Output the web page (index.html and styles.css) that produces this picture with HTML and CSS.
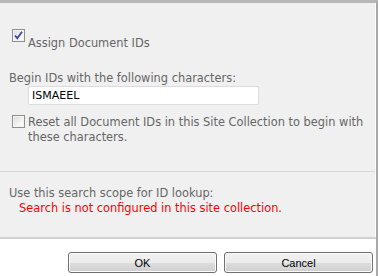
FILE: index.html
```html
<!DOCTYPE html>
<html lang="en">
<head>
    <meta charset="UTF-8">
    <title>Document ID Settings</title>
    <link rel="stylesheet" href="styles.css">
</head>
<body>
    <div class="dialog">
        <div class="panel">
            <div class="group group-ids">
                <label class="check-row check-row-main">
                    <span class="checkbox checked">
                        <svg width="11" height="11" viewBox="0 0 11 11"><path d="M2 5.5 L4.3 8.2 L9 1.8" fill="none" stroke="#3b4a9c" stroke-width="1.8"/></svg>
                    </span>
                    <span class="check-label check-label-low">Assign Document IDs</span>
                </label>

                <div class="field-label">Begin IDs with the following characters:</div>
                <input class="text-input" type="text" value="ISMAEEL">

                <label class="check-row">
                    <span class="checkbox"></span>
                    <span class="check-label">Reset all Document IDs in this Site Collection to begin with these characters.</span>
                </label>
            </div>

            <div class="group group-search">
                <div class="field-label">Use this search scope for ID lookup:</div>
                <div class="error-text">Search is not configured in this site collection.</div>
            </div>
        </div>

        <div class="footer">
            <button class="btn">OK</button>
            <button class="btn">Cancel</button>
        </div>
    </div>
</body>
</html>
```

FILE: styles.css
```css
* {
    margin: 0;
    padding: 0;
    box-sizing: border-box;
}

body {
    font-family: "DejaVu Sans", Verdana, sans-serif;
    font-size: 11.4px;
    line-height: 15px;
    color: #666666;
    background: #ffffff;
}

.dialog {
    width: 378px;
    height: 276px;
    border-top: 3px solid #b8b8b8;
    border-right: 2px solid #a9a9a9;
    display: flex;
    flex-direction: column;
}

.panel {
    background: #f0f0f0;
    margin-right: 1px;
}

.group {
    padding-left: 9px;
}

.group-ids {
    padding-top: 26px;
    padding-bottom: 26px;
    border-bottom: 1px solid #d8d8d8;
}

.group-search {
    padding-top: 14px;
    padding-bottom: 21px;
}

.check-row {
    display: flex;
    align-items: flex-start;
    gap: 3px;
    margin-left: 3px;
    margin-top: 10px;
    padding-right: 4px;
}

.check-row-main {
    margin-top: 0;
    margin-bottom: 20px;
}

.check-label-low {
    padding-top: 7px;
}

.checkbox {
    flex: none;
    width: 13px;
    height: 13px;
    border: 1px solid #8e8f8f;
    background: linear-gradient(135deg, #dadada 0%, #f4f4f4 60%, #ffffff 100%);
    box-shadow: inset 0 0 0 1px #f4f4f4;
    display: flex;
    align-items: center;
    justify-content: center;
}

.field-label {
    color: #666666;
}

.text-input {
    display: block;
    width: 231px;
    height: 19px;
    margin-left: 19px;
    padding: 0 3px;
    border: 1px solid #dcdcdc;
    border-radius: 2px;
    background: #ffffff;
    font-family: "DejaVu Sans", Verdana, sans-serif;
    font-size: 11px;
    color: #000000;
    outline: none;
}

.error-text {
    color: #ff0000;
    margin-left: 10px;
}

.footer {
    flex: 1;
    border-top: 2px solid #d2d2d2;
    display: flex;
    justify-content: flex-end;
    align-items: flex-start;
    gap: 7px;
    padding-top: 13px;
    padding-right: 3px;
}

.btn {
    width: 149px;
    height: 21px;
    border: 1px solid #707070;
    border-radius: 3px;
    background: linear-gradient(#f2f2f2 0%, #ebebeb 50%, #dddddd 51%, #cfcfcf 100%);
    box-shadow: inset 0 0 0 1px #fcfcfc;
    font-family: "Liberation Sans", Arial, sans-serif;
    font-size: 11px;
    color: #000000;
}
```
